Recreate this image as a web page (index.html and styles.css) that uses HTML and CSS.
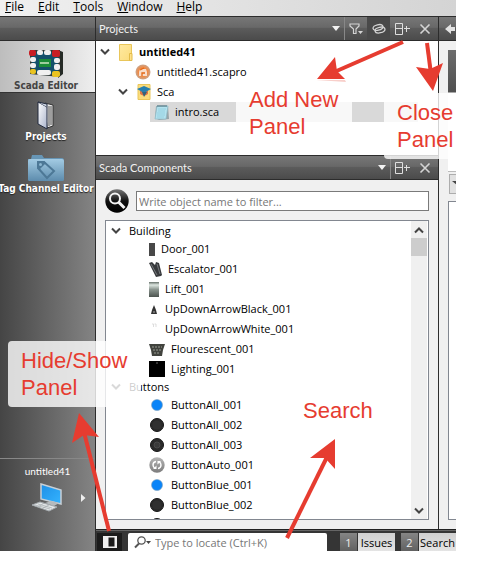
FILE: index.html
```html
<!DOCTYPE html>
<html lang="en">
<head>
<meta charset="utf-8">
<title>Scada Editor</title>
<link rel="stylesheet" href="styles.css">
</head>
<body>
<svg class="defs" aria-hidden="true">
  <defs>
    <linearGradient id="gFolder" x1="0" y1="0" x2="0" y2="1"><stop offset="0" stop-color="#a3cbe3"/><stop offset="1" stop-color="#5d8cad"/></linearGradient>
    <linearGradient id="gYellow" x1="0" y1="0" x2="1" y2="1"><stop offset="0" stop-color="#ffe9a0"/><stop offset="1" stop-color="#fbdc7c"/></linearGradient>
    <linearGradient id="gScreen" x1="0" y1="0" x2="1" y2="1"><stop offset="0" stop-color="#1d8fe6"/><stop offset="1" stop-color="#35b4ff"/></linearGradient>
    <linearGradient id="gLift" x1="0" y1="0" x2="0" y2="1"><stop offset="0" stop-color="#66706a"/><stop offset=".2" stop-color="#dde6e0"/><stop offset=".5" stop-color="#8b958f"/><stop offset="1" stop-color="#4c544f"/></linearGradient>
    <linearGradient id="gPage" x1="0" y1="0" x2="1" y2="1"><stop offset="0" stop-color="#ffffff"/><stop offset="1" stop-color="#aab4cc"/></linearGradient>
    <linearGradient id="gAuto" x1="0" y1="0" x2="0" y2="1"><stop offset="0" stop-color="#b5b5b5"/><stop offset="1" stop-color="#7c7c7c"/></linearGradient>
    <radialGradient id="gOrange"><stop offset="0" stop-color="#ef7622"/><stop offset=".6" stop-color="#f08a45"/><stop offset="1" stop-color="#c9a58c"/></radialGradient>
    <linearGradient id="gBall" x1="0" y1="0" x2="0" y2="1"><stop offset="0" stop-color="#777"/><stop offset=".5" stop-color="#111"/><stop offset="1" stop-color="#000"/></linearGradient>
    <symbol id="chev" viewBox="0 0 10 8"><path d="M1 1.5 5 5.5 9 1.5" fill="none" stroke="#444" stroke-width="2"/></symbol>
    <symbol id="split" viewBox="0 0 16 12"><path d="M1.500.5h7v11h-7zM1.500 5.500h7M10 5.500h6M12.500 3v6" fill="none" stroke="#dedede"/></symbol>
    <symbol id="close" viewBox="0 0 12 12"><path d="M1.500 1.500l9 9M10.500 1.500l-9 9" fill="none" stroke="#d4d4d4" stroke-width="1.600"/></symbol>
    <symbol id="blue" viewBox="0 0 16 16"><circle cx="8" cy="8" r="5.500" fill="#0a84f8" stroke="#7f9fb8" stroke-width=".6"/></symbol>
    <symbol id="black" viewBox="0 0 16 16"><circle cx="8" cy="8" r="6.500" fill="#2a2a2a" stroke="#161616"/><circle cx="8" cy="8" r="4.500" fill="#303030"/></symbol>
  </defs>
</svg>
<div class="window">
  <nav class="menu" aria-label="Main menu">
    <button><u>F</u>ile</button><button><u>E</u>dit</button><button><u>T</u>ools</button><button><u>W</u>indow</button><button><u>H</u>elp</button>
  </nav>
  <div class="workspace">
    <aside class="modes">
      <div class="bar"></div>
      <button class="mode selected">
        <svg width="36" height="30" viewBox="0 0 36 30"><path d="M30 1l5 2v22l-5 4z" fill="#252a26"/><path d="M2 1h30v27L2 25z" fill="#303a38"/><path d="M4 3h26v23L4 23z" fill="#14516b"/><path d="M11 10h12v8H11z" fill="#1b8b38"/><path d="M12 14h9" stroke="#9fce9f" stroke-width="2"/><rect x="1" y="1" width="7" height="6" rx="2" fill="#c81e24"/><rect x="24" y="1" width="8" height="7" rx="2" fill="#c81e24"/><g fill="#f0f0f0"><rect x="9" y="1" width="6" height="5" rx="2"/><rect x="16" y="1" width="7" height="5" rx="2"/><rect x="2" y="8" width="6" height="5" rx="2"/><rect x="2" y="14" width="6" height="5" rx="2"/><rect x="26" y="9" width="6" height="5" rx="2"/><rect x="26" y="15" width="6" height="6" rx="2"/><rect x="9" y="21" width="14" height="5" rx="2"/></g><rect x="2" y="20" width="6" height="5" rx="2" fill="#eac320"/><rect x="24" y="22" width="8" height="6" rx="2" fill="#eac320"/></svg>
        <span>Scada Editor</span>
      </button>
      <button class="mode">
        <svg width="18" height="29" viewBox="0 0 18 29"><path d="M8 2l8 2v21l-6 2z" fill="#e8e8e8" stroke="#333"/><path d="M12 5v20M14 5v19" stroke="#555"/><path d="M1 1l9 5v22l-9-5z" fill="url(#gPage)" stroke="#20293d"/><path d="M1 1l9 2v3" fill="#ccd3e1" stroke="#20293d"/></svg>
        <span>Projects</span>
      </button>
      <button class="mode">
        <svg width="36" height="28" viewBox="0 0 36 28"><path d="M0 5h3l1-4h10l2 3h18q2 0 2 3v18q0 2-2 2H2q-2 0-2-2z" fill="#6796b6"/><path d="M0 7q0-2 2-2h32q2 0 2 2v18q0 2-2 2H2q-2 0-2-2z" fill="url(#gFolder)"/><path d="M10 8h6l10 9-7 7-9-10z" fill="none" stroke="#4d7896" stroke-width="2"/><path d="M9 7h7l2 2-7 7-2-2z" fill="#4d7896"/><circle cx="12.500" cy="10.500" r="1.500" fill="#8db7d1"/></svg>
        <span>Tag Channel Editor</span>
      </button>
      <button class="kit">
        <span>untitled41</span>
        <svg width="32" height="29" viewBox="0 0 32 29"><path d="M10 1l20 6v14l-20-5z" fill="url(#gScreen)" stroke="#c7d0d7" stroke-width="1.500"/><path d="M14 20l6-2 8 2-5 3z" fill="#b5babd"/><path d="M1 22l8-3 17 5-8 4z" fill="#e3e6e8" stroke="#a4aaae"/><path d="M4 22l15 4M7 21l14 4M7 24l6-4M12 25l6-3" stroke="#a4aaae" stroke-width=".7"/></svg>
        <svg class="more" width="5" height="8" viewBox="0 0 5 8"><path d="M0 0l4.500 4-4.500 4z" fill="#eee"/></svg>
      </button>
    </aside>
    <div class="content">
      <div class="panes">
        <main class="side">
          <section class="projects">
            <header class="bar">
              <h2>Projects</h2>
              <button class="drop" aria-label="Choose view"><svg width="8" height="5" viewBox="0 0 8 5"><path d="M0 0h8L4 5z" fill="#f2f2f2"/></svg></button>
              <button class="tool ruled" aria-label="Filter"><svg width="14" height="12" viewBox="0 0 14 12"><path d="M1 1h9v2L7 6v4.500H4.500V6L1 3z" fill="none" stroke="#d4d4d4" stroke-width="1.200"/><path d="M9 8h5l-2.500 3z" fill="#d4d4d4"/></svg></button>
              <button class="tool on" aria-label="Synchronize"><svg width="14" height="12" viewBox="0 0 14 12"><g fill="none" stroke="#d4d4d4" stroke-width="1.300"><ellipse cx="6" cy="4.500" rx="5" ry="2.800" transform="rotate(-12 6 4.500)"/><ellipse cx="8" cy="7" rx="5" ry="2.800" transform="rotate(-12 8 7)"/></g></svg></button>
              <button class="tool" aria-label="Split"><svg width="16" height="12"><use href="#split"/></svg></button>
              <button class="tool" aria-label="Close"><svg width="12" height="12"><use href="#close"/></svg></button>
            </header>
            <ul class="tree">
              <li><svg width="10" height="8"><use href="#chev"/></svg><svg class="ficon" width="14" height="17" viewBox="0 0 14 17"><path d="M.5.500h12v16H.5z" fill="url(#gYellow)" stroke="#e9c65a"/><path d="M10.500 9.500h2.500v7h-2.500z" fill="#ffe28c" stroke="#e3bb48"/></svg><b>untitled41</b></li>
              <li class="file"><svg width="16" height="16" viewBox="0 0 16 16"><circle cx="8" cy="8" r="7.500" fill="url(#gOrange)"/><path d="M4 12V8l1-3h6l1 3v4z" fill="#f8ddca"/><path d="M7 12V9h3M5 6l4-2" fill="none" stroke="#e36714" stroke-width="1.300"/></svg><span>untitled41.scapro</span></li>
              <li class="group"><svg width="10" height="8"><use href="#chev"/></svg><svg class="gicon" width="14" height="16" viewBox="0 0 14 16"><path d="M1 .5h12v15H1z" fill="#fbdc7c" stroke="#e9c65a"/><path d="M3 7v3q4 3 8 0V7z" fill="#df7545"/><path d="M0 5l7-3 7 3-7 4z" fill="#277fae"/><path d="M5 8l2 5 3-5z" fill="#35637c"/></svg><span>Sca</span></li>
              <li class="leaf"><svg width="16" height="17" viewBox="0 0 16 17"><path d="M2 2h12l1 13-10 1-4-2z" fill="#97a4a8"/><path d="M3 2h11l-2 13H1z" fill="#b4e2ee" stroke="#8bb9c6" stroke-width=".7"/><path d="M4 5h8M4 7h7M3 9h8M3 11h8M3 13h7" stroke="#86c9da" stroke-width=".7"/><path d="M4 1v2M6 1v2M8 1v2M10 1v2M12 1v2" stroke="#476974"/></svg><span>intro.sca</span></li>
            </ul>
          </section>
          <section class="components">
            <header class="bar">
              <h2>Scada Components</h2>
              <button class="drop" aria-label="Choose view"><svg width="8" height="5" viewBox="0 0 8 5"><path d="M0 0h8L4 5z" fill="#f2f2f2"/></svg></button>
              <button class="tool ruled" aria-label="Split"><svg width="16" height="12"><use href="#split"/></svg></button>
              <button class="tool" aria-label="Close"><svg width="12" height="12"><use href="#close"/></svg></button>
            </header>
            <div class="body">
              <div class="find">
                <svg width="24" height="24" viewBox="0 0 24 24"><circle cx="12" cy="12" r="11.700" fill="url(#gBall)"/><circle cx="10" cy="9.500" r="5" fill="none" stroke="#f4f4f4" stroke-width="2"/><path d="M13.500 13l6 6" stroke="#f4f4f4" stroke-width="3"/></svg>
                <input type="text" aria-label="Filter objects" placeholder="Write object name to filter...">
              </div>
              <div class="listbox">
                <ul class="list">
                  <li class="cat"><svg width="10" height="8"><use href="#chev"/></svg>Building</li>
                  <li><svg width="6" height="13" viewBox="0 0 6 13"><path d="M0 0h6v13H0z" fill="#484848"/></svg>Door_001</li>
                  <li><svg width="13" height="16" viewBox="0 0 13 16"><path d="M0 2l3-1 3 3 1-3 3 1 3 12-1 1-5 1z" fill="#383a3d"/><path d="M2 3l6 11M8 3l3 10" stroke="#85898c" stroke-width=".8"/></svg>Escalator_001</li>
                  <li><svg width="10" height="15" viewBox="0 0 10 15"><path d="M0 0h10v15H0z" fill="url(#gLift)"/></svg>Lift_001</li>
                  <li><svg width="10" height="16" viewBox="0 0 10 16"><path d="M5 4l2 5 1 4H2l1-4z" fill="#333"/><path d="M4.500 10h1v2h-1z" fill="#aaa"/></svg>UpDownArrowBlack_001</li>
                  <li><svg width="10" height="16" viewBox="0 0 10 16"><path d="M3 3h1.500v3M5.500 3H7v3" stroke="#ddd" fill="none"/></svg>UpDownArrowWhite_001</li>
                  <li><svg width="16" height="13" viewBox="0 0 16 13"><path d="M0 1h16l-2 6-1 6H3L2 7z" fill="#41433e"/><path d="M3 4h10M4 7h8M5 10h6" stroke="#999c92" stroke-dasharray="2 1"/></svg>Flourescent_001</li>
                  <li><svg width="16" height="16" viewBox="0 0 16 16"><path d="M0 0h16v16H0z"/><path d="M7.500 1h1v2h-1z" fill="#666"/></svg>Lighting_001</li>
                  <li class="cat"><svg width="10" height="8"><use href="#chev"/></svg>Buttons</li>
                  <li><svg width="16" height="16"><use href="#blue"/></svg>ButtonAll_001</li>
                  <li><svg width="16" height="16"><use href="#black"/></svg>ButtonAll_002</li>
                  <li><svg width="16" height="16" viewBox="0 0 16 16"><circle cx="8" cy="8" r="6.500" fill="#2a2a2a" stroke="#161616"/><circle cx="8" cy="8" r="3" fill="#3a3a3a" stroke="#4a4a4a"/></svg>ButtonAll_003</li>
                  <li><svg width="16" height="16" viewBox="0 0 16 16"><circle cx="8" cy="8" r="7.700" fill="url(#gAuto)"/><g fill="none" stroke="#fff" stroke-width="1.400"><path d="M7 4.500Q4 5 4 8q0 2 2 3.500M9 11.500q3-.5 3-3.500 0-2-2-3.500"/></g><path d="M4 12h3.500V8.500zM12 4H8.500v3.500z" fill="#fff"/></svg>ButtonAuto_001</li>
                  <li><svg width="16" height="16"><use href="#blue"/></svg>ButtonBlue_001</li>
                  <li><svg width="16" height="16"><use href="#black"/></svg>ButtonBlue_002</li>
                  <li><svg width="16" height="16"><use href="#black"/></svg></li>
                </ul>
                <div class="scroll">
                  <svg width="10" height="8" viewBox="0 0 10 8"><path d="M1 6.500 5 2.500 9 6.500" fill="none" stroke="#444" stroke-width="2"/></svg>
                  <div class="thumb"></div>
                  <svg width="10" height="8"><use href="#chev"/></svg>
                </div>
              </div>
            </div>
          </section>
        </main>
        <section class="editor">
          <div class="bar"><svg width="10" height="12" viewBox="0 0 10 12"><path d="M0 6l6-5v3h4v4H6v3z" fill="#e2e2e2"/></svg></div>
          <div class="canvas"></div>
          <div class="combo"><svg width="5" height="4" viewBox="0 0 5 4"><path d="M0 0h5v4z" fill="#444"/></svg></div>
          <div class="sheet"></div>
        </section>
      </div>
      <footer class="status">
        <button class="toggle" aria-label="Hide or show panel"><svg width="14" height="12" viewBox="0 0 14 12"><path d="M0 0h14v12H0z" fill="#f0f0f0"/><path d="M5.500 1.500h6v9h-6z" fill="#1b1b1b"/></svg></button>
        <label class="locate"><svg width="18" height="13" viewBox="0 0 18 13"><g fill="none" stroke="#555"><circle cx="7.500" cy="4.500" r="3.700" stroke-width="1.300"/><path d="M5 7.500l-4 4" stroke-width="2"/></g><path d="M12 5h5l-2.500 3z" fill="#444"/></svg><input type="text" aria-label="Locate" placeholder="Type to locate (Ctrl+K)"></label>
        <button class="out"><i>1</i><span>Issues</span></button>
        <button class="out"><i>2</i><span>Search</span></button>
      </footer>
    </div>
  </div>
  <div class="note add">Add New<br>Panel</div>
  <div class="note shut">Close<br>Panel</div>
  <div class="note hide">Hide/Show<br>Panel</div>
  <div class="note seek">Search</div>
  <svg class="arrows" width="456" height="551" viewBox="0 0 456 551" aria-hidden="true">
    <g stroke="#e63c30" stroke-width="4"><path d="M403 42 332 73"/><path d="M427 43 431 74"/><path d="M109 531 84 432"/><path d="M287 538 327 457"/></g>
    <g fill="#e63c30"><path d="M317 79 335 57 337 71 345 79z"/><path d="M433 91 416 67 430 69 443 63z"/><path d="M79 413 72 443 84 435 99 437z"/><path d="M335 439 310 458 325 458 335 469z"/></g>
    <path d="M316 80h29l1 2z" fill="#f8cfca"/>
  </svg>
</div>
</body>
</html>
```
FILE: styles.css
```css
* { box-sizing: border-box; }
html, body { margin: 0; height: 100%; background: #fff; }
body {
  padding: 0 25px 29px 0;
  font: 11px/16px "Open Sans", "Noto Sans", sans-serif;
  color: #000;
  overflow: hidden;
}
button, input { font: inherit; border: 0; padding: 0; margin: 0; background: none; color: inherit; }
ul { list-style: none; margin: 0; padding: 0; }
svg { flex: none; display: block; }
.defs { position: absolute; width: 0; height: 0; }

.window { position: relative; height: 100%; display: flex; flex-direction: column; overflow: hidden; }
.menu {
  display: flex; gap: 14px; flex: none; height: 17px; padding-left: 5px;
  background: linear-gradient(90deg, #f0f0f0, #d4d4d4); border-bottom: 1px solid #2c2c2c;
}
.menu button { font-size: 12px; line-height: 13px; padding-bottom: 3px; }
.workspace { flex: 1; min-height: 0; display: flex; }

.bar {
  flex: none; height: 24px; display: flex; align-items: center;
  background: linear-gradient(#777 0, #686868 45%, #5b5b5b 50%, #4b4b4b 100%);
  border-bottom: 1px solid #2c2c2c; color: #f2f2f2;
}
.bar h2 { flex: 1; margin: 0; padding-left: 3px; font: 11px/16px Lato, "Open Sans", sans-serif; }
.bar button { align-self: stretch; display: flex; align-items: center; justify-content: center; }
.side .bar { padding-right: 2px; }
.drop { width: 17px; }
.tool { width: 23px; }
.ruled { border-left: 1px solid #888; }
.on { background: #494949; }

.modes {
  width: 96px; flex: none; display: flex; flex-direction: column; overflow: hidden;
  background: linear-gradient(90deg, #454545, #848484); border-right: 1px solid #2c2c2c;
}
.mode {
  flex: none; height: 52px; display: flex; flex-direction: column; align-items: center; justify-content: flex-end;
  padding-right: 3px;
  color: #fff; font: bold 10px/13px "DejaVu Sans Condensed", "DejaVu Sans", sans-serif;
  white-space: nowrap; text-shadow: 0 1px 1px #222;
}
.mode.selected {
  background: linear-gradient(90deg, #bdbdbd, #eee); color: #444; text-shadow: none;
  border-bottom: 1px solid #333; margin-bottom: -2px;
}
.kit {
  margin-top: auto; height: 93px; border-top: 1px solid #888; color: #fff; font-family: Lato, "Open Sans", sans-serif; font-size: 10px;
  display: grid; grid-template-columns: 1fr 14px; justify-items: center; align-content: start;
  padding: 4px 0 0; row-gap: 4px; align-items: center;
}
.kit span { grid-column: 1 / 3; }
.kit .more { justify-self: start; }
.kit svg:not(.more) { margin-left: 12px; }

.content { flex: 1; min-width: 0; display: flex; flex-direction: column; }
.panes { flex: 1; min-height: 0; display: flex; }
.side { flex: 1; min-width: 0; display: flex; flex-direction: column; border-right: 1px solid #2c2c2c; }

.projects { height: 138px; flex: none; }
.tree { padding-top: 1px; }
.tree li { display: flex; align-items: center; height: 20px; padding-left: 4px; }
.ficon { margin: 0 6px 0 9px; }
.tree .file { padding-left: 39px; gap: 6px; }
.tree .group { padding-left: 22px; }
.gicon { margin: 0 6px 0 9px; }
.tree .leaf { margin: 0 20px 0 54px; gap: 5px; background: #d9d9d9; }

.components { flex: 1; min-height: 0; display: flex; flex-direction: column; background: #f0f0f0; }
.components .bar { height: 25px; border-top: 1px solid #2c2c2c; }
.body { flex: 1; min-height: 0; display: flex; flex-direction: column; padding: 9px 9px 9px; gap: 7px; }
.find { display: flex; align-items: center; gap: 7px; height: 24px; }
.find input { flex: 1; min-width: 0; height: 20px; background: #fff; border: 1px solid #7a7a7a; padding: 0 2px; }
input::placeholder { color: #777; opacity: 1; }
.listbox { flex: 1; min-height: 0; display: flex; background: #fff; border: 1px solid #828790; }
.list { flex: 1; padding-top: 2px; overflow: hidden; }
.list li { height: 20px; display: flex; align-items: center; gap: 6px; padding-left: 43px; }
.list .cat { height: 16px; gap: 8px; padding-left: 5px; }
.scroll { width: 16px; margin-right: 1px; display: flex; flex-direction: column; align-items: center; background: #f0f0f0; padding: 5px 0 4px; }
.thumb { width: 100%; height: 18px; background: #cdcdcd; margin: 4px 0 auto; }

.editor { width: 17px; flex: none; display: flex; flex-direction: column; background: #f0f0f0; }
.editor .bar { padding-left: 6px; }
.canvas { height: 122px; margin: 9px 0 2px 9px; background: linear-gradient(#6c6c6c, #505050 42px, #fff 43px); border-bottom: 1px solid #bbb; }
.combo { height: 20px; margin-left: 10px; padding: 6px 0 0 2px; background: #e1e1e1; border: 1px solid #adadad; border-right: 0; }
.sheet { flex: 1; margin: 7px 0 9px 9px; background: #fff; border: 1px solid #828790; border-right: 0; }

.status { flex: none; height: 22px; display: flex; background: #353535; border-top: 1px solid #222; padding: 3px 0 0 1px; box-shadow: inset 0 1px #666; }
.toggle { width: 25px; display: flex; align-items: center; justify-content: center; background: #1c1c1c; }
.locate { flex: 1; min-width: 0; margin: 0 13px 0 6px; display: flex; align-items: center; gap: 3px; padding-left: 6px; background: #fff; border-radius: 2px 2px 0 0; }
.locate input { flex: 1; min-width: 0; height: 18px; }
.out { display: flex; flex: none; margin-right: 6px; line-height: 19px; }
.out:last-child { margin-right: 0; }
.out i { width: 17px; font-style: normal; color: #eee; background: linear-gradient(#858585, #616161); margin-right: 1px; }
.out span { width: 37px; background: linear-gradient(#d0d0d0, #e4e4e4); }

.note { position: absolute; padding: 6px 13px; border-radius: 4px; background: rgba(255, 255, 255, .8); color: #e63c30; font: 22px/27px "Liberation Sans", Arial, sans-serif; white-space: nowrap; }
.add { left: 236px; top: 80px; width: 116px; }
.shut { left: 384px; top: 93px; right: 0; }
.hide { left: 8px; top: 341px; width: 133px; }
.seek { left: 290px; top: 391px; }
.arrows { position: absolute; left: 0; top: 0; }
```
